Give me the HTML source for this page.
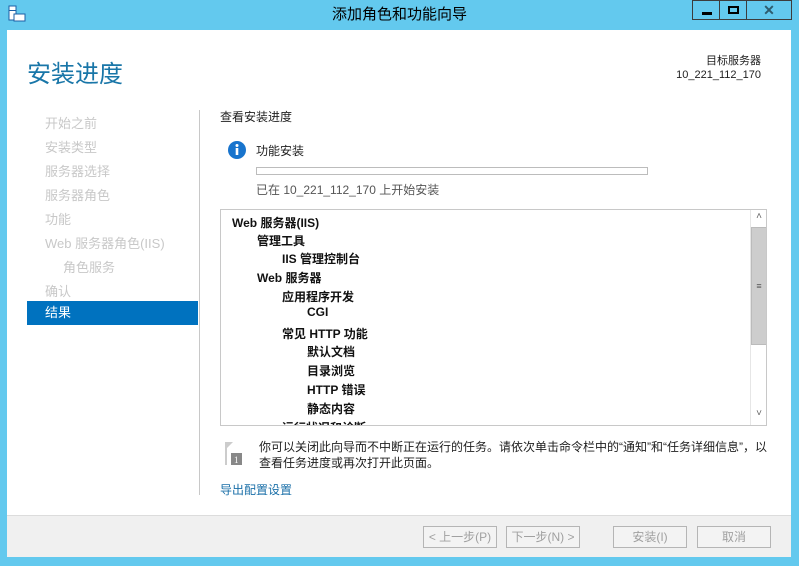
<!DOCTYPE html>
<html><head><meta charset="utf-8"><style>
*{margin:0;padding:0;box-sizing:border-box}
body{width:799px;height:566px;background:#63c9ee;position:relative;overflow:hidden;font-family:"Liberation Sans","Noto Sans CJK SC",sans-serif;font-size:12px;color:#1e1e1e}
.a{position:absolute}
.title{left:0;top:0;width:799px;height:30px;text-align:center;line-height:29px;font-size:15px;color:#000}
.win{left:7px;top:30px;width:784px;height:527px;background:#fff}
.foot{left:7px;top:515px;width:784px;height:42px;background:#f0f0f0;border-top:1px solid #dcdcdc}
.nav{left:45px;font-size:13px;color:#c8c8c8}
.btn{top:526px;height:22px;border:1px solid #b5b5b5;background:#f3f3f3;color:#a0a0a0;text-align:center;line-height:20px;font-size:12px}
.tb{border:1px solid #3c3c3c;height:20px;top:0}
.li{position:absolute;font-weight:bold;font-size:12px;color:#111}
</style></head><body>
<div class="a title">添加角色和功能向导</div>
<svg class="a" style="left:8px;top:5px" width="18" height="18"><rect x="1" y="1" width="7" height="14" fill="#fff" stroke="#1b5fa5"/><rect x="1" y="5" width="7" height="1" fill="#1b5fa5"/><rect x="6" y="9" width="11" height="7" fill="#fff" stroke="#1b5fa5"/></svg>
<div class="a tb" style="left:692px;width:28px"><div class="a" style="left:9px;top:11px;width:10px;height:3px;background:#000"></div></div>
<div class="a tb" style="left:719px;width:28px"><div class="a" style="left:8px;top:5px;width:11px;height:8px;border:2px solid #000"></div></div>
<div class="a tb" style="left:746px;width:46px;color:#2d5c6e;text-align:center;font-weight:bold;font-size:14px;line-height:18px">✕</div>
<div class="a win"></div>
<div class="a foot"></div>
<div class="a" style="left:27px;top:54px;font-size:24px;color:#1976a8">安装进度</div>
<div class="a" style="left:600px;top:54px;width:161px;text-align:right;font-size:11px;line-height:14px;color:#1e1e1e">目标服务器<br>10_221_112_170</div>
<div class="a" style="left:199px;top:110px;width:1px;height:385px;background:#c8c8c8"></div>
<div class="a nav" style="top:113px">开始之前</div>
<div class="a nav" style="top:137px">安装类型</div>
<div class="a nav" style="top:161px">服务器选择</div>
<div class="a nav" style="top:185px">服务器角色</div>
<div class="a nav" style="top:209px">功能</div>
<div class="a nav" style="top:233px">Web 服务器角色(IIS)</div>
<div class="a nav" style="top:257px;left:63px">角色服务</div>
<div class="a nav" style="top:281px">确认</div>
<div class="a" style="left:27px;top:301px;width:171px;height:24px;background:#0072bf;color:#fff;font-size:13px;line-height:24px;padding-left:18px">结果</div>
<div class="a" style="left:220px;top:108px">查看安装进度</div>
<svg class="a" style="left:228px;top:141px" width="18" height="18"><circle cx="9" cy="9" r="9" fill="#1874cd"/><rect x="7.7" y="7" width="2.6" height="7" fill="#fff"/><circle cx="9" cy="4.5" r="1.5" fill="#fff"/></svg>
<div class="a" style="left:256px;top:142px">功能安装</div>
<div class="a" style="left:256px;top:167px;width:392px;height:8px;border:1px solid #bcbcbc"></div>
<div class="a" style="left:256px;top:181px;color:#555">已在 10_221_112_170 上开始安装</div>
<div class="a" style="left:220px;top:209px;width:547px;height:217px;border:1px solid #c8c8c8;overflow:hidden">
<div class="li" style="left:11px;top:4px">Web 服务器(IIS)</div>
<div class="li" style="left:36px;top:22px">管理工具</div>
<div class="li" style="left:61px;top:40px">IIS 管理控制台</div>
<div class="li" style="left:36px;top:59px">Web 服务器</div>
<div class="li" style="left:61px;top:78px">应用程序开发</div>
<div class="li" style="left:86px;top:95px">CGI</div>
<div class="li" style="left:61px;top:115px">常见 HTTP 功能</div>
<div class="li" style="left:86px;top:133px">默认文档</div>
<div class="li" style="left:86px;top:152px">目录浏览</div>
<div class="li" style="left:86px;top:171px">HTTP 错误</div>
<div class="li" style="left:86px;top:190px">静态内容</div>
<div class="li" style="left:61px;top:209px">运行状况和诊断</div>
<div class="a" style="left:529px;top:0;width:17px;height:215px;background:#fff;border-left:1px solid #e6e6e6"></div>
<div class="a" style="left:531px;top:1px;width:14px;font-size:10px;color:#666;text-align:center">˄</div>
<div class="a" style="left:530px;top:17px;width:16px;height:118px;background:#cdcdcd;border:1px solid #bbb;text-align:center;font-size:9px;line-height:116px;color:#555">≡</div>
<div class="a" style="left:531px;top:198px;width:14px;font-size:10px;color:#666;text-align:center">˅</div>
</div>
<svg class="a" style="left:224px;top:441px" width="22" height="26"><polygon points="1,1 9,1 3,7 3,24 1,24" fill="#ccc"/><rect x="7" y="12" width="11" height="12" fill="#888"/><text x="10" y="22" font-size="9" fill="#fff" font-family="Liberation Serif">1</text></svg>
<div class="a" style="left:259px;top:439px;width:512px;line-height:16px">你可以关闭此向导而不中断正在运行的任务。请依次单击命令栏中的“通知”和“任务详细信息”，以查看任务进度或再次打开此页面。</div>
<div class="a" style="left:220px;top:481px;color:#1a6fa8">导出配置设置</div>
<div class="a btn" style="left:423px;width:74px">&lt; 上一步(P)</div>
<div class="a btn" style="left:506px;width:74px">下一步(N) &gt;</div>
<div class="a btn" style="left:613px;width:74px">安装(I)</div>
<div class="a btn" style="left:697px;width:74px">取消</div>
</body></html>
